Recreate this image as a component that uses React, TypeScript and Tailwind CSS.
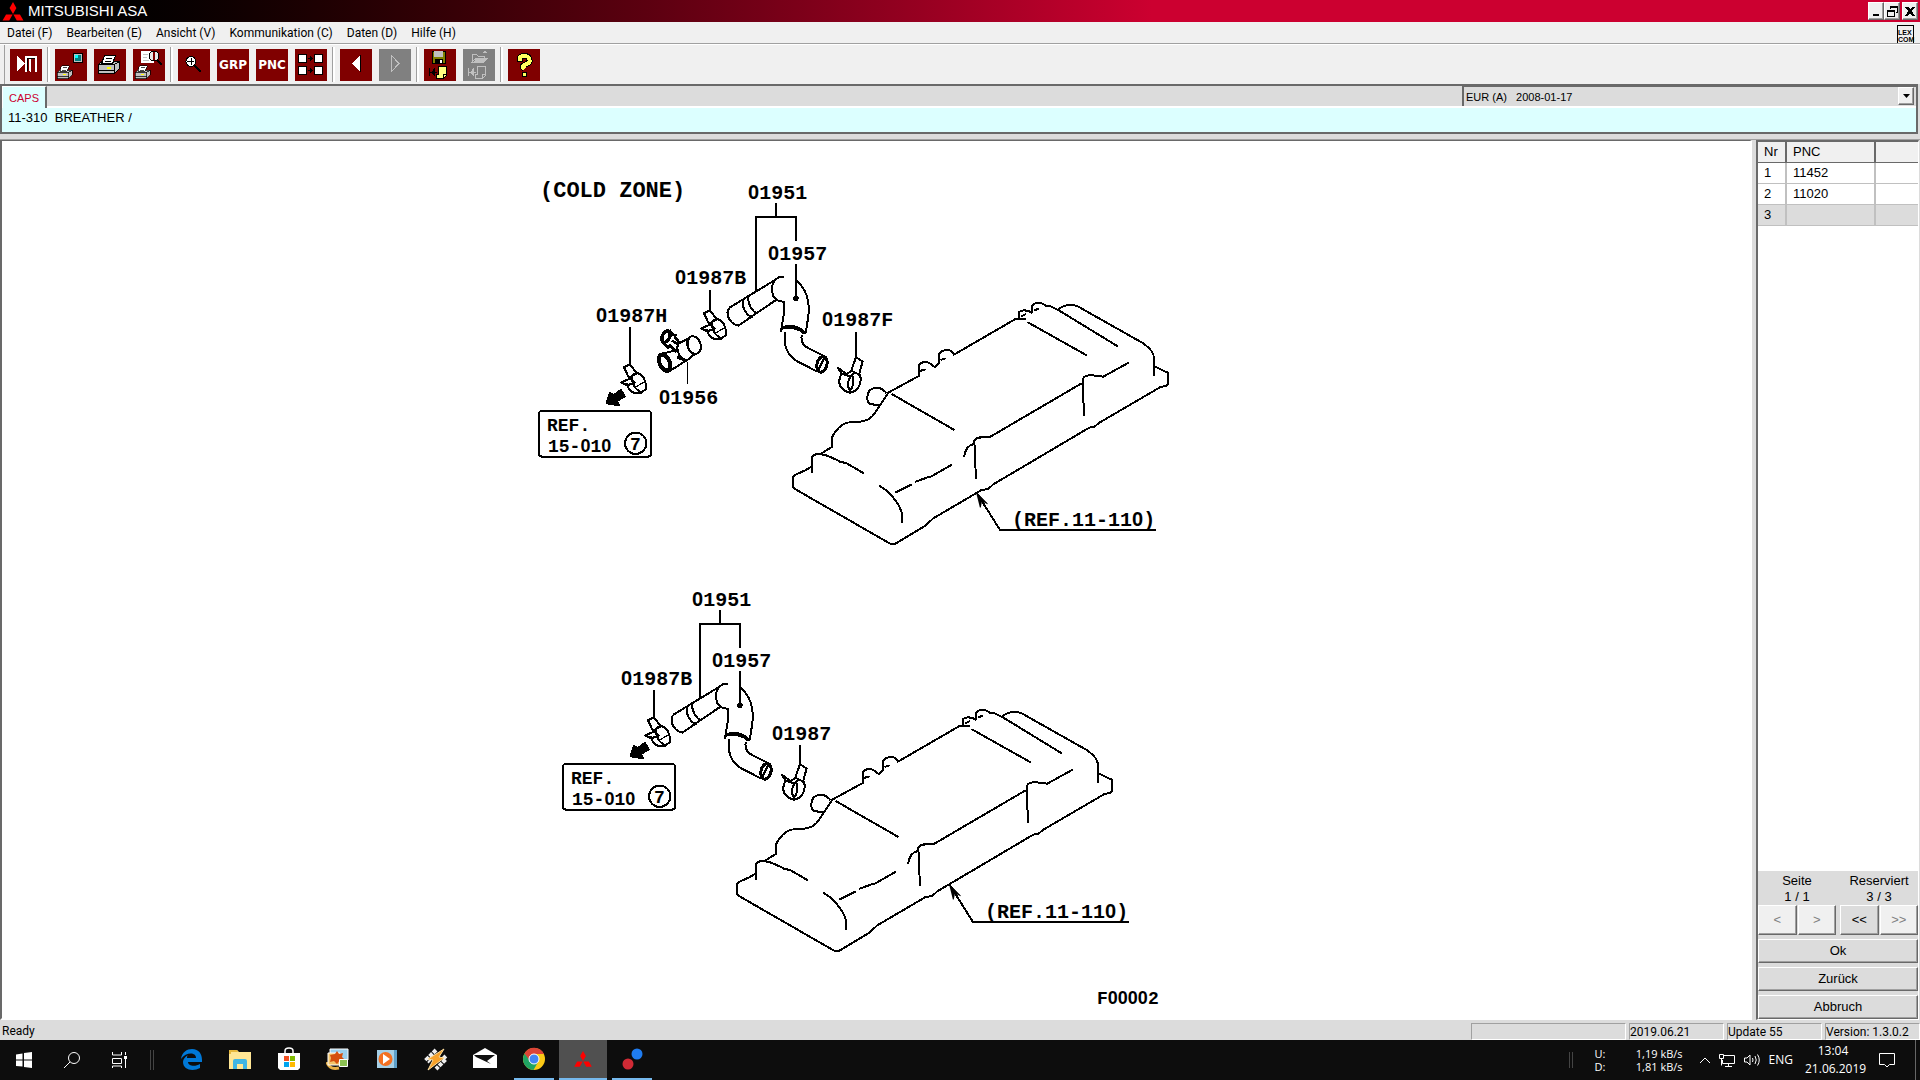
import React from 'react';

const PANEL_FONT = "font-['Liberation_Sans',Arial,sans-serif]";
const RAISED = "border border-t-white border-l-white border-r-[#696969] border-b-[#696969] shadow-[inset_-1px_-1px_0_#a0a0a0]";

const MitsubishiLogo = ({ className }: { className: string }) => (
  <svg viewBox="0 0 22 20" className={className} fill="#f00">
    <path d="M11 0l3.6 6.3L11 12.6 7.4 6.3z" />
    <path d="M10.6 13.2L7 19.6H0l3.7-6.4z" />
    <path d="M11.4 13.2l3.6 6.4h7l-3.7-6.4z" />
  </svg>
);

/* ---------- toolbar ---------- */

const Printer = () => (
  <g stroke="#000" strokeWidth="1">
    <path d="M9.500 6.500h11l-3 8h-11z" fill="#fff" />
    <path d="M11 9.500h6M10 12.500h6" fill="none" />
    <path d="M3.500 15.500l3-3h1l-1 2h11l1-2h6v7l-5 5h-16z" fill="#c0c0c0" />
    <path d="M3.500 15.500h16l5-3M19.500 15.500v9M3.500 21.500h16" fill="none" />
    <path d="M12 18h4v2h-4z" fill="#ff0" stroke="none" />
  </g>
);

const Note = ({ dim = false }: { dim?: boolean }) => (
  <g stroke={dim ? '#c0c0c0' : '#000'} fill={dim ? 'none' : '#ffff80'}>
    <path d="M14.500 17.500h8v9l-3 3h-7v-4h2z" />
    <path d="M22 25.500h-3v4" />
    <path d="M5.500 19v8M5 23.500h8M10.500 20v6l-3-2.500z" fill={dim ? '#c0c0c0' : '#000'} />
  </g>
);

const tools = [
  [
    {
      label: 'Beenden',
      art: (
        <>
          <path d="M7 6v17l8-8.500z" fill="#fff" />
          <path d="M16 23V7.500h10V23" fill="none" stroke="#fff" strokeWidth="2" />
          <path d="M17.500 22V9.500H25" fill="none" stroke="#000" />
          <path d="M19 10h2v14l-2-2z" fill="#fff" />
        </>
      ),
    },
  ],
  [
    {
      label: 'Bildschirm drucken',
      art: (
        <>
          <path d="M18.500 4.500h9v9h-9z" fill="#c0c0c0" stroke="#000" />
          <path d="M20 6h6v6h-6z" fill="#008080" />
          <path d="M20 6h3v3h-3z" fill="#0ff" />
          <g transform="translate(0 12) scale(.7 .72)"><Printer /></g>
        </>
      ),
    },
    { label: 'Drucken', art: <g transform="translate(1 0)"><Printer /></g> },
    {
      label: 'Druckvorschau',
      art: (
        <>
          <path d="M8 2h13v12H8z" fill="#fff" />
          <path d="M10 5h5M10 8h4M10 11h6" stroke="#c0c0c0" />
          <circle cx="21" cy="7" r="5" fill="#e8e8e8" stroke="#000" />
          <path d="M21 3v8" stroke="#800000" strokeWidth="2" />
          <path d="M24 11l5 5" stroke="#000" strokeWidth="2" />
          <g transform="translate(0 12) scale(.7 .72)"><Printer /></g>
        </>
      ),
    },
  ],
  [
    {
      label: 'Zoom',
      art: (
        <>
          <path d="M16 16l7 7" stroke="#000" strokeWidth="2" />
          <circle cx="13" cy="12.500" r="5" fill="#fff" stroke="#000" />
          <path d="M13 9v7M9 12.500h7" stroke="#000" />
        </>
      ),
    },
    { label: 'GRP', text: true },
    { label: 'PNC', text: true },
    {
      label: 'Übersicht',
      art: (
        <>
          <path d="M3.500 5.500h8v8h-8zM19.500 5.500h8v8h-8zM3.500 17.500h8v8h-8zM19.500 17.500h8v8h-8z" fill="#fff" stroke="#000" />
          <path d="M13 9.500h4M13 21.500h4" stroke="#000" />
          <path d="M15 7l3 2.500-3 2.500zM15 19l3 2.500-3 2.500z" fill="#000" />
        </>
      ),
    },
  ],
  [
    {
      label: 'Vorherige Seite',
      art: (
        <>
          <path d="M20 6v17h1V6z" fill="#000" />
          <path d="M20 6v17l-8-8.500z" fill="#fff" />
        </>
      ),
    },
    { label: 'Nächste Seite', off: true, art: <path d="M12 6v17l8-8.500z" fill="none" stroke="#c0c0c0" /> },
  ],
  [
    {
      label: 'Speichern',
      art: (
        <>
          <path d="M8 2h13v12H8z" fill="#808000" stroke="#000" />
          <path d="M10 2h9v6h-9z" fill="#c0c0c0" />
          <path d="M11 10h8v4h-8z" fill="#000" />
          <path d="M16 11h2v3h-2z" fill="#fff" />
          <Note />
        </>
      ),
    },
    {
      label: 'Laden',
      off: true,
      art: (
        <>
          <path d="M9 13V5h4l2 2h6v2M9 13l4-4h12l-4 4z" fill="none" stroke="#c0c0c0" />
          <path d="M13 9h11l-4 4h-9zM22 1l2 3h-4z" fill="#c0c0c0" />
          <Note dim />
        </>
      ),
    },
  ],
  [
    {
      label: 'Hilfe',
      art: (
        <>
          <path d="M11.500 13V9.500q1-2.500 5-2.500t5 3.500-4 5-1 4.500" fill="none" stroke="#000" strokeWidth="6" />
          <path d="M14 23h5v5h-5z" fill="#000" />
          <path d="M11.500 12V9.500q1-2.500 5-2.500t5 3.500-4 5-1 4.500" fill="none" stroke="#ffff60" strokeWidth="4" />
          <path d="M15 24h3v3h-3z" fill="#ffff60" />
        </>
      ),
    },
  ],
];

const Toolbar = () => (
  <div className="flex h-10 items-center gap-[5px] border-t border-white bg-[#f0f0f0] pl-1">
    {tools.map((group, i) => (
      <React.Fragment key={i}>
        <div className={i === 0 ? 'h-full w-px bg-[#a0a0a0]' : 'h-[35px] w-[3px] border-l border-[#a0a0a0] bg-white'} />
        <div className="flex gap-[7px]">
          {group.map((tool) => (
            <button
              key={tool.label}
              aria-label={tool.label}
              disabled={'off' in tool}
              className={`flex size-8 items-center justify-center ${'off' in tool ? 'bg-[#808080]' : 'bg-[#800000]'}`}
            >
              {'text' in tool ? (
                <span className="font-['DejaVu_Sans',sans-serif] text-[12px] font-bold text-white">{tool.label}</span>
              ) : (
                <svg viewBox="0 0 32 32" className="size-8" shapeRendering="crispEdges">{tool.art}</svg>
              )}
            </button>
          ))}
        </div>
      </React.Fragment>
    ))}
  </div>
);

/* ---------- parts drawing ---------- */

// The mono face has a dotted zero, so zeros come from the sans face.
const Label = ({ x, y, children, size = 20 }: { x: number; y: number; children: string; size?: number }) => (
  <text x={x} y={y} fontSize={size} className="font-['Liberation_Mono',monospace] font-bold">
    {children.split(/(0)/).map((part, i) =>
      part === '0' ? <tspan key={i} className="font-['Liberation_Sans',sans-serif]">0</tspan> : part
    )}
  </text>
);

const Hose = () => (
  <g transform="translate(530 170) scale(.3333)">
    <path d="M738 100V141M678 365V141H798V212M798 283V385" />
    <circle cx="798" cy="385" r="5" fill="#000" />
    <path d="M762 320C738 318 722 340 727 365C728 385 738 392 762 396C768 415 757 445 755 480" />
    <path d="M735 330L600 412C585 425 594 460 625 467L738 390M640 388C633 410 650 438 668 442M655 380C652 400 668 427 682 430" />
    <path d="M798 330C833 360 840 400 835 440L827 490" />
    <path d="M752 485C752 460 805 460 827 492M757 476C777 470 805 474 822 490" />
    <path d="M765 485C760 525 770 555 800 573L862 605M815 495C812 522 825 530 838 536L885 560" />
    <ellipse cx="876" cy="583" rx="15" ry="24" transform="rotate(14 876 583)" strokeWidth="9" />
    <path d="M866 598L882 566" />
  </g>
);

// `leader` is where the line up to the part number starts
const InletClamp = ({ leader }: { leader: number }) => (
  <g transform="translate(530 170) scale(.3333)">
    <path d={`M301 ${leader}V585M282 592L300 583L320 610L297 624Z`} />
    <path d="M290 640C297 672 325 678 347 658C350 635 340 610 318 609C298 612 304 655 336 668" />
    <path d="M274 637L300 626L314 638L292 646Z" />
    <path d="M318 650L344 636" strokeWidth="4" />
  </g>
);

const OutletClamp = ({ leader }: { leader: number }) => (
  <g transform="translate(530 170) scale(.3333)">
    <path d={`M978 ${leader}V562L998 575L987 614L964 602L978 562`} />
    <path d="M934 612C920 640 932 662 960 668C988 664 996 636 990 614M962 666C948 645 953 622 975 608M956 668C972 650 974 630 966 612" />
    <path d="M922 592L950 612L966 602M922 592L936 612L964 620" />
  </g>
);

const Valve = () => (
  <g transform="translate(530 170) scale(.3333)">
    <ellipse cx="404" cy="578" rx="15" ry="26" strokeWidth="12" transform="rotate(-25 404 578)" />
    <path d="M395 552L440 540M418 604L468 572" />
    <path d="M412 600L425 590" strokeWidth="10" />
    <ellipse cx="492" cy="525" rx="20" ry="27" transform="rotate(-22 492 525)" />
    <path d="M482 500C466 512 472 545 490 552M474 506L444 522C438 540 446 562 470 572L492 554" />
    <ellipse cx="408" cy="500" rx="11" ry="18" strokeWidth="10" transform="rotate(25 408 500)" />
    <path d="M418 480L426 492L440 498M398 516L418 536M426 512L444 522M418 524L440 546M434 500L450 520" strokeWidth="8" />
    <path d="M442 560L470 573" strokeWidth="10" />
    <path d="M472 575V643" strokeWidth="4" />
  </g>
);

const RefBox = () => (
  <>
    <g transform="translate(530 170) scale(.3333)">
      <path d="M230 700L240 668L250 676L273 660L284 680L260 693L267 706Z" fill="#000" />
      <rect x="26" y="722" width="338" height="138" rx="10" />
      <circle cx="317" cy="820" r="32" />
    </g>
    <g fill="#000" stroke="none">
      <Label x={547} y={431} size={18}>REF.</Label>
      <Label x={548} y={452} size={18}>15-010</Label>
      <Label x={630} y={450} size={18}>7</Label>
    </g>
  </>
);

const Cover = () => (
  <g transform="translate(780 290) scale(.3333)">
    <path d="M325 308L418 257L416 226C422 213 448 215 454 224L464 231L478 218V192C482 178 508 178 516 185L522 194L705 88H738M718 86V66C726 57 746 62 755 68L757 46C765 36 790 38 796 47L812 49L835 60L1015 170" />
    <path d="M437 238L420 243M497 205L482 210M738 72L722 80M778 57L762 60" />
    <path d="M835 60C848 42 880 42 895 50L1090 160C1115 180 1122 190 1122 205V258" />
    <path d="M1122 228L1163 248V283C1160 290 1150 288 1140 292L960 397L942 411L928 413L640 583L625 597L605 600L460 685L435 708L355 756C345 764 335 764 325 758L50 600L39 592V560C45 550 60 553 95 530V502C100 490 110 495 125 490L157 470V440C165 425 180 405 200 398L250 394C270 388 280 380 297 350L325 308" />
    <path d="M95 530V550M118 493C140 492 160 505 180 515L200 520L253 551M335 312L523 420M742 96L920 196" />
    <path d="M297 586L320 602C345 625 365 655 366 675V700M346 608L395 583M405 576L440 563L455 559L517 523" />
    <path d="M552 502C555 480 565 465 582 462M588 568L583 452C588 441 605 441 628 442L905 280M912 378L908 268C915 250 940 256 970 260L1046 218" />
    <path d="M320 310C308 295 292 292 282 294C258 300 258 335 270 342L297 346" />
  </g>
);

const CoverRef = () => (
  <>
    <g transform="translate(780 290) scale(.3333)">
      <path d="M590 608L660 720H1128" />
      <path d="M590 608L601 652L605 632L622 641Z" fill="#000" strokeWidth="3" />
    </g>
    <g fill="#000" stroke="none"><Label x={1012} y={526}>(REF.11-110)</Label></g>
  </>
);

const PartsDrawing = () => (
  <svg viewBox="535 141 682 876" className="h-[876px] w-[682px]" fill="none" stroke="#000" strokeWidth="6" strokeLinejoin="round">
    <g shapeRendering="crispEdges">
      <Hose />
      <InletClamp leader={470} />
      <g transform="translate(80 -54)"><InletClamp leader={521} /></g>
      <Valve />
      <OutletClamp leader={486} />
      <Cover />
      <RefBox />
      <CoverRef />
      <g transform="translate(-56 407)">
        <Hose />
        <OutletClamp leader={504} />
        <Cover />
      </g>
      <g transform="translate(24 353)">
        <InletClamp leader={502} />
        <RefBox />
      </g>
      <g transform="translate(-27 392)"><CoverRef /></g>
    </g>
    <g fill="#000" stroke="none">
      <Label x={540} y={197} size={22}>(COLD ZONE)</Label>
      <Label x={748} y={199}>01951</Label>
      <Label x={768} y={260}>01957</Label>
      <Label x={675} y={284}>01987B</Label>
      <Label x={596} y={322}>01987H</Label>
      <Label x={659} y={404}>01956</Label>
      <Label x={822} y={326}>01987F</Label>
      <Label x={692} y={606}>01951</Label>
      <Label x={712} y={667}>01957</Label>
      <Label x={621} y={685}>01987B</Label>
      <Label x={772} y={740}>01987</Label>
      <Label x={1097} y={1004} size={18}>F00002</Label>
    </g>
  </svg>
);

/* ---------- right side panel ---------- */

const rows = [
  { nr: 1, pnc: '11452' },
  { nr: 2, pnc: '11020' },
  { nr: 3, pnc: '' },
];

const pager = [
  { label: 'Seite', pos: '1 / 1', keys: [{ sign: '<', on: false }, { sign: '>', on: false }] },
  { label: 'Reserviert', pos: '3 / 3', keys: [{ sign: '<<', on: true }, { sign: '>>', on: false }] },
];

const SidePanel = () => (
  <aside className={`${PANEL_FONT} flex w-[163px] shrink-0 flex-col border-t-2 border-r border-b border-l-2 border-t-[#696969] border-l-[#696969] border-r-white border-b-white bg-white text-[13px] text-black`}>
    <table className="w-full table-fixed border-collapse text-left leading-4">
      <thead>
        <tr className="h-5 bg-[#f0f0f0]">
          <th className="w-7 border-r-2 border-b border-[#696969] pl-1.5 font-normal">Nr</th>
          <th className="w-[89px] border-r-2 border-b border-[#696969] pl-1.5 font-normal">PNC</th>
          <th className="border-b border-[#696969]"></th>
        </tr>
      </thead>
      <tbody>
        {rows.map((row) => (
          <tr key={row.nr} className={row.pnc ? 'h-[21px]' : 'h-[21px] bg-[#dcdcdc]'}>
            <td className="border-r-2 border-b border-[#c0c0c0] pl-1.5">{row.nr}</td>
            <td className="border-r-2 border-b border-[#c0c0c0] pl-1.5">{row.pnc}</td>
            <td className="border-b border-[#c0c0c0]"></td>
          </tr>
        ))}
      </tbody>
    </table>
    <div className="mt-auto flex flex-col gap-1 bg-[#dcdcdc] pt-0.5">
      <div className="flex justify-between gap-1">
        {pager.map((p) => (
          <div key={p.label} className="flex-1 text-center leading-4">
            <div>{p.label}</div>
            <div>{p.pos}</div>
            <div className="flex gap-px">
              {p.keys.map((key) => (
                <button
                  key={key.sign}
                  disabled={!key.on}
                  className={`${RAISED} h-[30px] flex-1 ${key.on ? 'bg-[#dcdcdc]' : 'bg-[#f0f0f0] text-[#808080]'}`}
                >
                  {key.sign}
                </button>
              ))}
            </div>
          </div>
        ))}
      </div>
      {['Ok', 'Zurück', 'Abbruch'].map((name) => (
        <button key={name} className={`${RAISED} h-6 bg-[#dcdcdc] leading-4`}>{name}</button>
      ))}
    </div>
  </aside>
);

/* ---------- windows taskbar ---------- */

const apps = [
  {
    name: 'Edge',
    art: <path d="M2 12C3 5 8 2 13 2c7 0 10 5 10 11v2H9c0 4 7 5 12 2v4c-7 4-17 2-17-6 0-3 2-5 5-7-1 1-1 2-1 3h9c0-6-10-6-15 1z" fill="#0078d7" />,
  },
  {
    name: 'Explorer',
    art: (
      <>
        <path d="M1 3h8l2 2h12v17H1z" fill="#ffe694" />
        <path d="M1 3h8l1 2H3v2H1z" fill="#e8b93c" />
        <path d="M5 22v-8q0-2 2-2h10q2 0 2 2v8h-4v-5H9v5z" fill="#3fb5e3" />
      </>
    ),
  },
  {
    name: 'Store',
    art: (
      <>
        <path d="M8 6V4q0-3 4-3t4 3v2" fill="none" stroke="#fff" strokeWidth="1.500" />
        <path d="M1 6h22v15l-2 2H3l-2-2z" fill="#fff" />
        <path d="M7 9h5v5H7z" fill="#f25022" />
        <path d="M13 9h5v5h-5z" fill="#7fba00" />
        <path d="M7 15h5v5H7z" fill="#00a4ef" />
        <path d="M13 15h5v5h-5z" fill="#ffb900" />
      </>
    ),
  },
  {
    name: 'Fotos',
    art: (
      <>
        <path d="M1 15q2 8 12 6" fill="none" stroke="#e8b048" strokeWidth="3" />
        <path d="M4 2h18v11H4z" fill="#9bd0ee" stroke="#fff" />
        <path d="M2 6h12v12H2z" fill="#f3c46a" stroke="#fff" />
        <path d="M11 4l2 3 4-1-1 4 2 2-4 1-3 4-3-3-4 1 1-4-1-3 5-1z" fill="#d5500f" />
        <path d="M13.500 12.500h8v7h-8z" fill="#8cc152" stroke="#fff" />
      </>
    ),
  },
  {
    name: 'Media Player',
    art: (
      <>
        <path d="M6 3h16v18H6z" fill="#5d9fc9" />
        <path d="M2 3h17v18H2z" fill="#a5cfe6" />
        <circle cx="10.500" cy="12" r="7" fill="#f37021" />
        <path d="M8 7v10l7-5z" fill="#fff" />
      </>
    ),
  },
  {
    name: 'Winamp',
    art: (
      <>
        <path d="M12 3L3 12l3 3M19 9l3 3-10 10" fill="none" stroke="#eee" strokeWidth="4" strokeDasharray="4 1" />
        <path d="M20 2L4 12l5 1-5 10 16-12-5-1z" fill="#f7a12a" stroke="#ffe0a0" />
      </>
    ),
  },
  {
    name: 'Mail',
    art: (
      <>
        <path d="M0 8l12-7 12 7v13H0z" fill="#fff" />
        <path d="M1 8h21l-8 6 4 3L3 10z" fill="#101010" />
      </>
    ),
  },
  {
    name: 'Chrome',
    running: true,
    art: (
      <>
        <circle cx="12" cy="12" r="11" fill="#fbc916" />
        <path d="M2.500 6.500A11 11 0 0 1 22 7H12L7 15z" fill="#db4437" />
        <path d="M2.500 6.500A11 11 0 0 0 11.500 23L16 15l-8-1z" fill="#1fa463" />
        <circle cx="12" cy="12" r="5" fill="#4285f4" stroke="#fff" />
      </>
    ),
  },
  { name: 'MITSUBISHI ASA', running: true, active: true },
  {
    name: 'Monitor',
    running: true,
    art: (
      <>
        <circle cx="17" cy="7" r="5.500" fill="#1f7cf0" />
        <circle cx="8" cy="17" r="5.500" fill="#d02a35" />
      </>
    ),
  },
];

const SystemButton = ({ name, children }: { name: string; children: React.ReactNode }) => (
  <button aria-label={name} className="flex w-12 items-center justify-center">
    <svg viewBox="0 0 18 18" className="size-[18px]" fill="none" stroke="#fff">{children}</svg>
  </button>
);

const Taskbar = () => (
  <footer className="flex h-10 bg-[#0d0d0d] font-['Open_Sans','Noto_Sans',sans-serif] text-[12px] text-white">
    <SystemButton name="Start">
      <path d="M1 3.500L7.500 2.500V8.500H1zM9 2l8-1v7.500H9zM1 9.500h6.500v6L1 15zM9 9.500h8V17l-8-1z" fill="#fff" stroke="none" />
    </SystemButton>
    <SystemButton name="Suche">
      <circle cx="11" cy="7" r="5.500" />
      <path d="M7 11l-6 6" />
    </SystemButton>
    <SystemButton name="Taskansicht">
      <path d="M1.500 1v3h9V1M1.500 7.500h9v5h-9zM1.500 17v-2h9v2M14.500 1v3M14.500 7v10" />
      <path d="M13 5h3v3h-3z" fill="#fff" stroke="none" />
    </SystemButton>
    <div className="mx-1.5 h-5 w-1 self-center border-x border-[#444]" />
    <div className="flex gap-px pl-[7px]">
      {apps.map((app) => (
        <button key={app.name} aria-label={app.name} className={`flex w-12 flex-col items-center ${app.active ? 'bg-[#505050]' : ''}`}>
          <span className="flex h-[38px] items-center">
            {app.art ? <svg viewBox="0 0 24 24" className="size-6">{app.art}</svg> : <MitsubishiLogo className="h-4 w-[18px]" />}
          </span>
          {app.running && <span className={`h-0.5 bg-[#76b9ed] ${app.active ? 'w-full' : 'w-10'}`} />}
        </button>
      ))}
    </div>
    <div className="ml-auto flex items-center">
      <div className="mr-[22px] h-4 w-1 border-x border-[#444]" />
      <div className="flex w-[88px] justify-between text-[11px] leading-[13px]">
        <div>U:<br />D:</div>
        <div className="text-right">1,19 kB/s<br />1,81 kB/s</div>
      </div>
      <div className="ml-4 flex items-center gap-2">
        <svg viewBox="0 0 12 8" className="h-2 w-3" fill="none" stroke="#fff"><path d="M1 7l5-5 5 5" /></svg>
        <svg viewBox="0 0 16 16" className="size-4" fill="none" stroke="#fff">
          <path d="M5 3.500h10.500v8H3.500V8M9.500 12v3M6 14.500h7M.500 2.500h4v4h-4zM2.500 6.500v7" />
        </svg>
        <svg viewBox="0 0 18 16" className="h-4 w-[18px]" fill="none" stroke="#fff">
          <path d="M1.500 6v4H4l3 3V3L4 6zM9.500 6q1 2 0 4M12 4q2.500 4 0 8M14.500 2.500q3.500 5.500 0 11" />
        </svg>
        <span>ENG</span>
      </div>
      <div className="ml-3 w-14 text-center leading-[18px]">13:04<br />21.06.2019</div>
      <svg viewBox="0 0 16 16" className="ml-[18px] size-4" fill="none" stroke="#fff">
        <path d="M.500 1.500h15v11h-5L8 15l-2.500-2.500h-5z" />
      </svg>
      <div className="ml-5 h-10 w-[5px] border-l border-[#666]" />
    </div>
  </footer>
);

/* ---------- frame ---------- */

const TitleBar = () => (
  <header className="flex h-[22px] items-center bg-linear-to-r from-black to-[#cc0030] to-60% pr-0.5 pl-0.5">
    <MitsubishiLogo className="h-[19px] w-[22px]" />
    <h1 className={`${PANEL_FONT} ml-1 flex-1 text-[15px] leading-5 text-white`}>MITSUBISHI ASA</h1>
    {[
      { name: 'Minimieren', d: 'M4 10h6v2H4z' },
      { name: 'Wiederherstellen', d: 'M5 2h8v7h-2V8h1V4H6v1H5zM2 6h8v7H2zm1 2v4h6V8z' },
      { name: 'Schließen', d: 'M2 3h3l2 2 2-2h3L8.500 7l3.500 5H9L7 9l-2 3H2l3.500-5z' },
    ].map((b, i) => (
      <button key={b.name} aria-label={b.name} className={`${RAISED} h-[18px] w-4 bg-[#f0f0f0] ${i === 2 ? 'ml-0.5' : ''}`}>
        <svg viewBox="0 0 14 14" className="size-3.5" shapeRendering="crispEdges"><path d={b.d} fillRule="evenodd" /></svg>
      </button>
    ))}
  </header>
);

const MenuBar = () => (
  <nav className="flex h-[22px] items-center border-b border-[#a0a0a0] bg-[#f0f0f0] pr-1.5 pl-[7px] font-[Roboto,'Open_Sans',sans-serif] text-[12px] leading-4 text-black">
    <div className="flex flex-1 gap-3.5">
      {['Datei (F)', 'Bearbeiten (E)', 'Ansicht (V)', 'Kommunikation (C)', 'Daten (D)', 'Hilfe (H)'].map((item) => (
        <button key={item}>{item}</button>
      ))}
    </div>
    <div className={`${PANEL_FONT} h-[18px] w-[17px] self-end border-t border-r border-l border-black pt-[3px] text-[7px] leading-[7px] font-bold`}>
      LEX<br />COM
    </div>
  </nav>
);

const status = [
  { text: '', width: 'w-[155px]' },
  { text: '2019.06.21', width: 'w-[95px]' },
  { text: 'Update 55', width: 'w-[95px]' },
  { text: 'Version: 1.3.0.2', width: 'w-[95px]' },
];

const App = () => {
  return (
    <div className="flex min-h-screen flex-col bg-[#dcdcdc]">
      <TitleBar />
      <MenuBar />
      <Toolbar />

      <section className={`${PANEL_FONT} mr-0.5 flex flex-col border-2 border-[#696969] bg-[#dcffff] text-[13px] leading-4 text-black`}>
        <div className="flex h-[22px] bg-[#dcdcdc]">
          <button className="w-[45px] border-t border-l border-r-2 border-t-white border-l-white border-r-[#696969] bg-[#dcffff] text-[11px] text-[#cc0030]">
            CAPS
          </button>
          <div className="flex flex-1 justify-end border-b-2 border-white">
            <div className="relative w-[454px] border-t border-l-2 border-[#696969]">
              <select aria-label="Katalog" className="h-full w-full appearance-none pl-0.5 text-[11px] outline-none">
                <option>EUR (A) &nbsp; 2008-01-17</option>
              </select>
              <span className={`${RAISED} pointer-events-none absolute top-0 right-0.5 flex h-[18px] w-4 items-center justify-center bg-[#f0f0f0]`}>
                <svg viewBox="0 0 7 4" className="h-1 w-[7px]"><path d="M0 0h7L3.500 4z" /></svg>
              </span>
            </div>
          </div>
        </div>
        <p className="h-6 pt-0.5 pl-1.5">11-310 &nbsp;BREATHER /</p>
      </section>

      <main className="mt-[5px] flex flex-1 border-t border-[#a0a0a0]">
        <div className="flex flex-1 justify-center overflow-hidden border-t border-r-2 border-b-2 border-l-2 border-t-[#696969] border-r-white border-b-white border-l-[#696969] bg-white">
          <PartsDrawing />
        </div>
        <div className="w-1 shrink-0" />
        <SidePanel />
        <div className="w-px shrink-0" />
      </main>

      <div className="flex h-5 items-center gap-[3px] bg-[#dcdcdc] pt-0.5 font-[Roboto,'Open_Sans',sans-serif] text-[12px] leading-4 text-black">
        <span className="flex-1 pl-0.5">Ready</span>
        {status.map((cell) => (
          <span key={cell.width + cell.text} className={`${cell.width} h-[17px] border border-t-[#a0a0a0] border-r-white border-b-white border-l-[#a0a0a0] whitespace-nowrap`}>
            {cell.text}
          </span>
        ))}
      </div>
      <Taskbar />
    </div>
  );
};

export default App;
